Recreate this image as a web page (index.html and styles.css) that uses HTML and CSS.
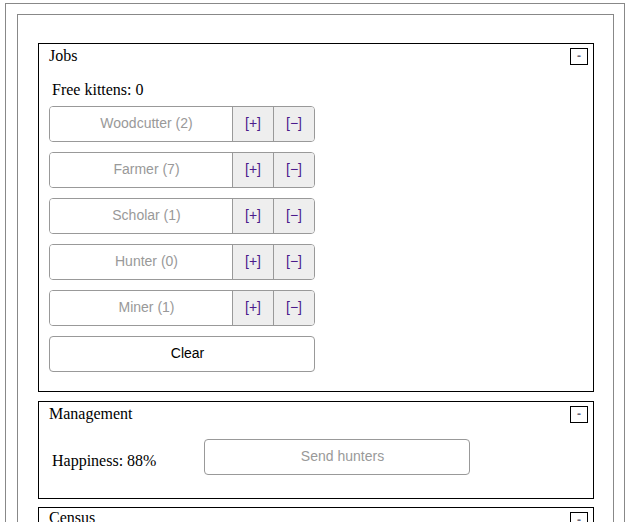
FILE: index.html
```html
<!DOCTYPE html>
<html>
<head>
<meta charset="utf-8">
<link rel="stylesheet" href="styles.css">
</head>
<body>
<div class="outer">
  <div class="inner">
    <div class="panel jobs">
      <div class="panel-head">
        <span class="panel-title">Jobs</span>
        <button class="toggle">-</button>
      </div>
      <div class="free">Free kittens: 0</div>
      <div class="job-list">
        <div class="job"><span class="job-name">Woodcutter (2)</span><span class="job-btn">[+]</span><span class="job-btn">[&minus;]</span></div>
        <div class="job"><span class="job-name">Farmer (7)</span><span class="job-btn">[+]</span><span class="job-btn">[&minus;]</span></div>
        <div class="job"><span class="job-name">Scholar (1)</span><span class="job-btn">[+]</span><span class="job-btn">[&minus;]</span></div>
        <div class="job"><span class="job-name">Hunter (0)</span><span class="job-btn">[+]</span><span class="job-btn">[&minus;]</span></div>
        <div class="job"><span class="job-name">Miner (1)</span><span class="job-btn">[+]</span><span class="job-btn">[&minus;]</span></div>
        <div class="wide-btn clear">Clear</div>
      </div>
    </div>
    <div class="panel management">
      <div class="panel-head">
        <span class="panel-title">Management</span>
        <button class="toggle">-</button>
      </div>
      <div class="mgmt-row">
        <span class="happiness">Happiness: 88%</span>
        <div class="wide-btn disabled">Send hunters</div>
      </div>
    </div>
    <div class="panel census">
      <div class="panel-head">
        <span class="panel-title">Census</span>
        <button class="toggle">-</button>
      </div>
    </div>
  </div>
</div>
</body>
</html>
```
FILE: styles.css
```css
html, body {
  margin: 0;
  padding: 0;
  background: #fff;
}
body {
  font-family: "Liberation Serif", "Times New Roman", serif;
  font-size: 16px;
  color: #000;
  overflow: hidden;
}
.outer {
  margin: 3px 5px 0 5px;
  border: 1px solid #888;
  padding: 10px 10px 0 11px;
  height: 700px;
}
.inner {
  border: 1px solid #888;
  padding: 28px 19px 0 20px;
  height: 700px;
}
.panel {
  border: 1px solid #000;
  padding: 0 5px 0 10px;
  margin-bottom: 9px;
}
.panel-head {
  display: flex;
  justify-content: space-between;
  align-items: flex-start;
  height: 22px;
}
.panel-title {
  padding-top: 3px;
  line-height: 18px;
}
.toggle {
  margin: 4px 0 0 0;
  width: 18px;
  height: 17px;
  padding: 0;
  border: 1px solid #000;
  background: #fff;
  font-family: "Liberation Sans", Arial, sans-serif;
  font-size: 12px;
  font-weight: bold;
  line-height: 13px;
  color: #667;
  box-sizing: border-box;
}
.free {
  margin-top: 15px;
  padding-left: 3px;
  line-height: 18px;
}
.jobs {
  padding-bottom: 19px;
}
.job-list {
  margin-top: 7px;
  display: flex;
  flex-direction: column;
  gap: 10px;
}
.job {
  display: flex;
  width: 266px;
  height: 36px;
  box-sizing: border-box;
  border: 1px solid #999;
  border-radius: 4px;
  overflow: hidden;
  font-family: "Liberation Sans", Arial, sans-serif;
  font-size: 14px;
}
.job-name {
  flex: 1;
  display: flex;
  align-items: center;
  justify-content: center;
  padding: 0 0 2px 11px;
  color: #999;
  background: #fff;
}
.job-btn {
  width: 40px;
  display: flex;
  align-items: center;
  justify-content: center;
  padding-bottom: 2px;
  border-left: 1px solid #999;
  background: #eee;
  color: #4b1a8c;
}
.wide-btn {
  width: 266px;
  height: 36px;
  box-sizing: border-box;
  border: 1px solid #999;
  border-radius: 4px;
  display: flex;
  align-items: center;
  justify-content: center;
  padding: 0 0 2px 11px;
  font-family: "Liberation Sans", Arial, sans-serif;
  font-size: 14px;
  background: #fff;
}
.clear {
  color: #000;
}
.disabled {
  color: #999;
}
.management {
  padding-bottom: 23px;
  margin-bottom: 8px;
}
.mgmt-row {
  margin-top: 15px;
  display: flex;
  align-items: flex-start;
}
.happiness {
  width: 152px;
  padding-left: 3px;
  margin-top: 13px;
  line-height: 18px;
}
.census .panel-title {
  padding-top: 1px;
}
.census {
  height: 100px;
}
```
